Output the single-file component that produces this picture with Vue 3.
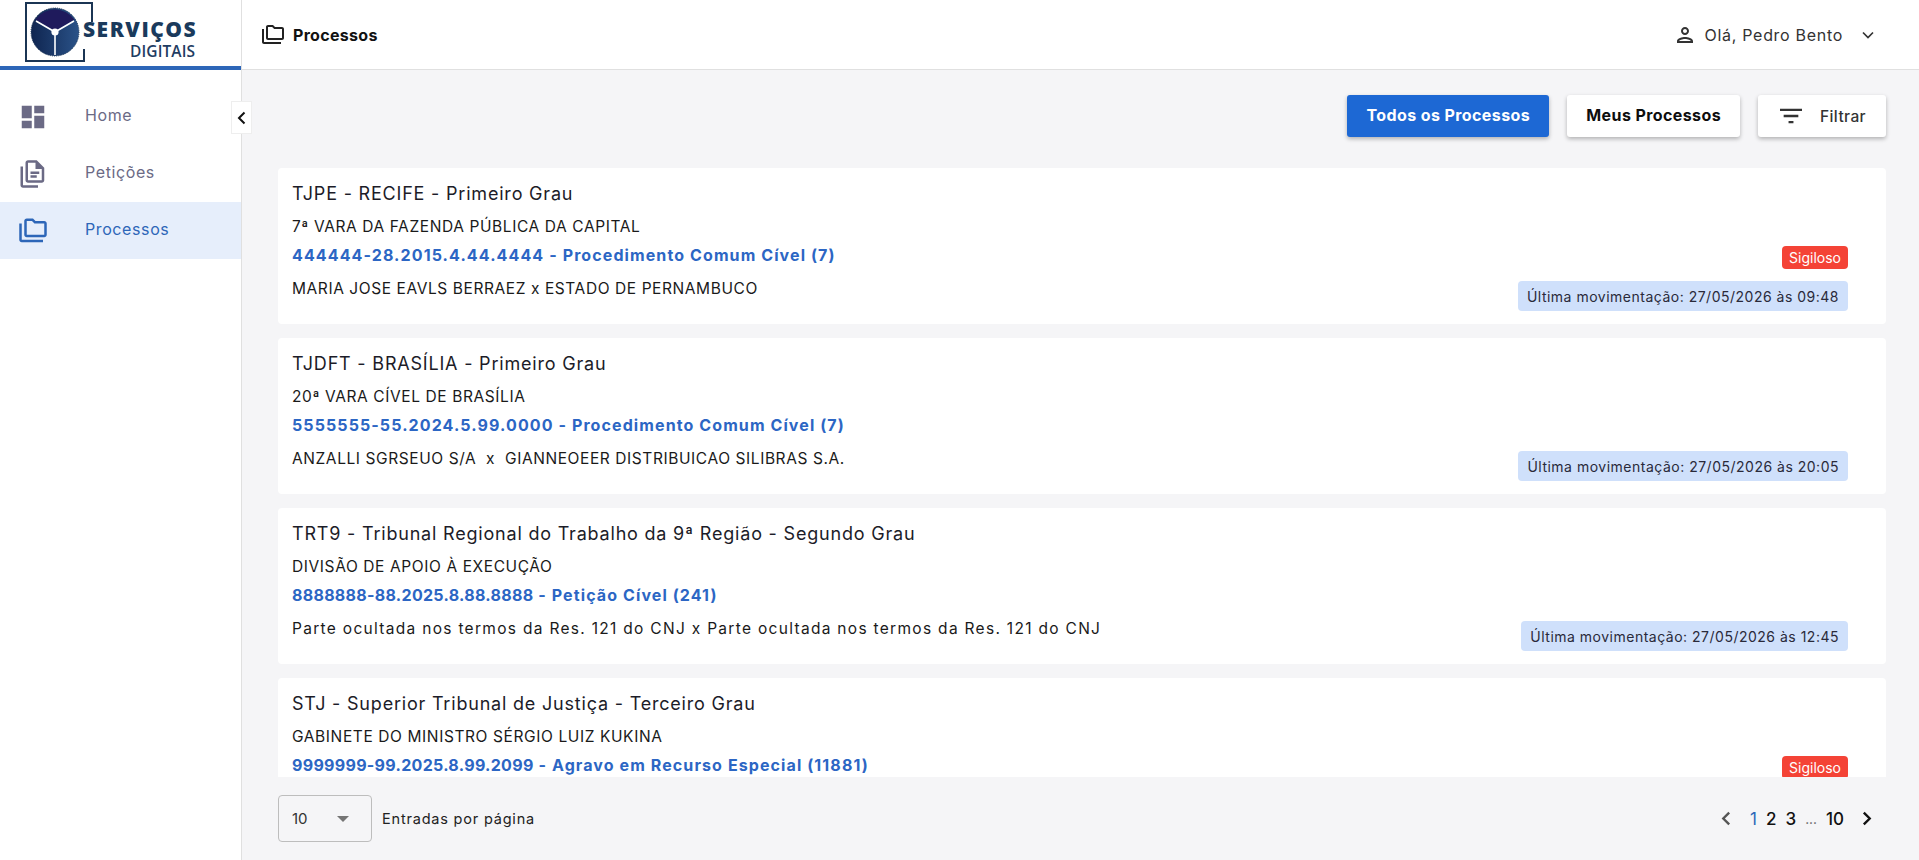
<script setup>
const menu = [
  { label: 'Home', icon: 'home' },
  { label: 'Petições', icon: 'doc' },
  { label: 'Processos', icon: 'folder', active: true },
]

const processos = [
  {
    tribunal: 'TJPE - RECIFE - Primeiro Grau',
    vara: '7ª VARA DA FAZENDA PÚBLICA DA CAPITAL',
    numero: '444444-28.2015.4.44.4444',
    classe: 'Procedimento Comum Cível (7)',
    partes: 'MARIA JOSE EAVLS BERRAEZ x ESTADO DE PERNAMBUCO',
    sigilo: true,
    mov: '27/05/2026 às 09:48',
  },
  {
    tribunal: 'TJDFT - BRASÍLIA - Primeiro Grau',
    vara: '20ª VARA CÍVEL DE BRASÍLIA',
    numero: '5555555-55.2024.5.99.0000',
    classe: 'Procedimento Comum Cível (7)',
    partes: 'ANZALLI SGRSEUO S/A  x  GIANNEOEER DISTRIBUICAO SILIBRAS S.A.',
    mov: '27/05/2026 às 20:05',
  },
  {
    tribunal: 'TRT9 - Tribunal Regional do Trabalho da 9ª Região - Segundo Grau',
    vara: 'DIVISÃO DE APOIO À EXECUÇÃO',
    numero: '8888888-88.2025.8.88.8888',
    classe: 'Petição Cível (241)',
    partes: 'Parte ocultada nos termos da Res. 121 do CNJ x Parte ocultada nos termos da Res. 121 do CNJ',
    ocultada: true,
    tight: true,
    mov: '27/05/2026 às 12:45',
  },
  {
    tribunal: 'STJ - Superior Tribunal de Justiça - Terceiro Grau',
    vara: 'GABINETE DO MINISTRO SÉRGIO LUIZ KUKINA',
    numero: '9999999-99.2025.8.99.2099',
    classe: 'Agravo em Recurso Especial (11881)',
    tight: true,
    sigilo: true,
  },
]

const folderPath = 'M3 19h17v2H3c-1.1 0-2-.9-2-2V6h2v13zM23 6v9c0 1.1-.9 2-2 2H7c-1.1 0-2-.9-2-2V4c0-1.1.9-2 2-2h5l2 2h7c1.1 0 2 .9 2 2zm-2 0h-7.83l-2-2H7v11h14V6z'
</script>

<template>
  <div class="app">
    <aside class="side">
      <div class="logo">
        <svg width="200" height="66" viewBox="0 0 200 66">
          <defs>
            <linearGradient id="seg" x1="0" y1="0" x2="1" y2="0">
              <stop offset="0" stop-color="#0f2550" />
              <stop offset="1" stop-color="#2a5288" />
            </linearGradient>
          </defs>
          <path d="M92 22V3H26v58h58V49" fill="none" stroke="#1b3554" stroke-width="2" />
          <circle cx="55" cy="32" r="24" fill="url(#seg)" stroke="#1b3554" stroke-dasharray="1 1.2" stroke-width="1" />
          <path d="M35.5 19.5a24 24 0 0 1 39 0L55 31z" fill="#1f1a5c" />
          <path d="M36 21l19 11 19-11M55 32v23" fill="none" stroke="#fff" stroke-width="1.6" />
          <circle cx="55" cy="32" r="3.6" fill="#fff" />
          <text x="83" y="37" class="logo-a">SERVIÇOS</text>
          <text x="130" y="57" class="logo-b">DIGITAIS</text>
        </svg>
      </div>

      <nav class="nav">
        <a v-for="item in menu" :key="item.label" class="nav-item" :class="{ active: item.active }">
          <svg class="nav-icon" viewBox="0 0 24 24" fill="currentColor">
            <path v-if="item.icon === 'home'" d="M3 13h8V3H3v10zm0 8h8v-6H3v6zm10 0h8V11h-8v10zm0-18v6h8V3h-8z" />
            <path v-else-if="item.icon === 'doc'" fill-rule="evenodd" d="M4 6H2v15c0 1.1.9 2 2 2h12v-2H4V6zM15 1H8c-1.1 0-2 .9-2 2v14c0 1.1.9 2 2 2h11c1.1 0 2-.9 2-2V7l-6-6zm4 16H8V3h6v5h5v9zM10 10h7v2h-7zM10 13h5v2h-5z" />
            <path v-else fill-rule="evenodd" :d="folderPath" />
          </svg>
          <span class="nav-label">{{ item.label }}</span>
        </a>
      </nav>

      <button type="button" class="collapse" aria-label="Recolher menu">
        <svg width="16" height="16" viewBox="0 0 16 16"><path d="M10.5 2.5 5 8l5.5 5.5" fill="none" stroke="#111" stroke-width="2" /></svg>
      </button>
    </aside>

    <div class="main">
      <header class="top">
        <div class="crumb">
          <svg width="24" height="24" viewBox="0 0 24 24" fill="#222"><path fill-rule="evenodd" :d="folderPath" /></svg>
          <span>Processos</span>
        </div>
        <div class="user">
          <svg width="24" height="24" viewBox="0 0 24 24" fill="#333"><path d="M12 6c1.1 0 2 .9 2 2s-.9 2-2 2-2-.9-2-2 .9-2 2-2m0 10c2.7 0 5.8 1.29 6 2H6c.23-.72 3.31-2 6-2m0-12C9.79 4 8 5.79 8 8s1.79 4 4 4 4-1.79 4-4-1.79-4-4-4zm0 10c-2.67 0-8 1.34-8 4v2h16v-2c0-2.66-5.33-4-8-4z" /></svg>
          <span>Olá, Pedro Bento</span>
          <svg width="14" height="14" viewBox="0 0 14 14"><path d="M2 4.5 7 9.5l5-5" fill="none" stroke="#333" stroke-width="1.7" /></svg>
        </div>
      </header>

      <div class="toolbar">
        <button type="button" class="btn primary">Todos os Processos</button>
        <button type="button" class="btn">Meus Processos</button>
        <button type="button" class="btn filter">
          <svg width="22" height="22" viewBox="3 3 18 18" fill="#333"><path d="M10 18h4v-2h-4v2zM3 6v2h18V6H3zm3 7h12v-2H6v2z" /></svg>
          <span>Filtrar</span>
        </button>
      </div>

      <section class="list">
        <article v-for="p in processos" :key="p.numero" class="card">
          <div class="info">
            <h3>{{ p.tribunal }}</h3>
            <p class="vara">{{ p.vara }}</p>
            <p class="numero"><span :class="{ tight: p.tight }">{{ p.numero }}</span> - {{ p.classe }}</p>
            <p v-if="p.partes" class="partes" :class="{ ocultada: p.ocultada }">{{ p.partes }}</p>
          </div>
          <div class="tags">
            <span v-if="p.sigilo" class="sigilo">Sigiloso</span>
            <span v-if="p.mov" class="mov">Última movimentação: {{ p.mov }}</span>
          </div>
        </article>
      </section>

      <footer class="foot">
        <div class="perpage">
          <div class="select">
            <span>10</span>
            <i class="caret"></i>
          </div>
          <span class="perpage-label">Entradas por página</span>
        </div>
        <div class="pages">
          <svg width="15" height="15" viewBox="0 0 14 14"><path d="M9.5 1.5 4 7l5.5 5.5" fill="none" stroke="#555" stroke-width="2.2" /></svg>
          <span class="cur">1</span>
          <span>2</span>
          <span>3</span>
          <span class="dots">...</span>
          <span class="last">10</span>
          <svg width="15" height="15" viewBox="0 0 14 14"><path d="M4.5 1.5 10 7l-5.5 5.5" fill="none" stroke="#111" stroke-width="2.2" /></svg>
        </div>
      </footer>
    </div>
  </div>
</template>

<style>
html, body { margin: 0; height: 100%; overflow: hidden; }
</style>

<style scoped>
.app {
  display: grid;
  grid-template-columns: 242px 1fr;
  grid-template-rows: 860px;
  height: 860px;
  background: #f5f5f7;
  color: #1c1c28;
  font-family: Inter, "Open Sans", sans-serif;
}

.side {
  position: relative;
  background: #fff;
  border-right: 1px solid #e0e0e0;
}

.logo {
  height: 66px;
  border-bottom: 4px solid #2d66b8;
}

.logo svg { display: block; }
.logo-a { font: 800 21px "Open Sans", sans-serif; fill: #1a3a5c; letter-spacing: 1.5px; }
.logo-b { font: 600 15.5px "Open Sans", sans-serif; fill: #1f3d63; letter-spacing: 0.1px; }

.nav {
  display: flex;
  flex-direction: column;
  padding-top: 18px;
}

.nav-item {
  display: flex;
  align-items: center;
  gap: 37px;
  height: 57px;
  padding-left: 18px;
  color: #6b6a85;
  font-size: 16px;
  letter-spacing: 0.6px;
}

.nav-label { padding-bottom: 3px; }

.nav-item.active {
  background: #e6eefb;
  color: #2d66b8;
}

.nav-icon { width: 30px; height: 30px; flex-shrink: 0; }

.collapse {
  position: absolute;
  top: 101px;
  right: -11px;
  width: 21px;
  height: 33px;
  padding: 0;
  display: grid;
  place-items: center;
  background: #fff;
  border: 1px solid #eee;
}

.main {
  display: flex;
  flex-direction: column;
  min-width: 0;
  min-height: 0;
  overflow: hidden;
}

.top {
  height: 69px;
  flex-shrink: 0;
  display: flex;
  align-items: center;
  justify-content: space-between;
  padding: 0 44px 0 19px;
  background: #fff;
  border-bottom: 1px solid #e0e0e0;
}

.crumb {
  display: flex;
  align-items: center;
  gap: 8px;
  font-size: 16px;
  letter-spacing: 0.3px;
  font-weight: 700;
  color: #111;
}

.user {
  display: flex;
  align-items: center;
  gap: 8px;
  font-size: 16px;
  letter-spacing: 0.7px;
  color: #333;
}

.user svg:last-child { margin-left: 10px; }

.toolbar {
  flex-shrink: 0;
  display: flex;
  justify-content: flex-end;
  gap: 18px;
  padding: 25px 33px 31px 0;
}

.btn {
  height: 42px;
  padding: 0 19px 2px;
  border: 0;
  border-radius: 3px;
  background: #fff;
  color: #0d0d0d;
  font: 700 16px Inter, sans-serif;
  letter-spacing: 0.4px;
  box-shadow: 0 2px 4px rgba(0, 0, 0, 0.28);
}

.btn.primary {
  background: #1d68d4;
  color: #fff;
  width: 202px;
}

.btn.filter {
  display: flex;
  align-items: center;
  gap: 18px;
  padding: 0 20px 0 22px;
  color: #333;
  font-size: 15.5px;
  font-weight: 500;
}

.list {
  flex: 1;
  min-height: 0;
  overflow: hidden;
  display: flex;
  flex-direction: column;
  gap: 14px;
  margin: 0 33px 0 36px;
}

.card {
  flex: 0 0 156px;
  display: flex;
  justify-content: space-between;
  padding: 14px 38px 13px 14px;
  box-sizing: border-box;
  background: #fff;
  border-radius: 4px;
}

.info {
  min-width: 0;
}

.info h3 {
  margin: 0;
  font-size: 18px;
  font-weight: 400;
  line-height: 24px;
  letter-spacing: 0.8px;
  color: #1c1c28;
}

.info p {
  margin: 0;
  line-height: 24px;
}

.info .vara {
  margin-top: 9px;
  font-size: 15.5px;
  letter-spacing: 0.6px;
  color: #1a1a1a;
}

.info .numero {
  margin-top: 4px;
  font-size: 16px;
  font-weight: 700;
  color: #2c66c4;
  letter-spacing: 1.1px;
}

.tight { letter-spacing: 0.3px; }

.info .partes {
  margin-top: 10px;
  font-size: 15.5px;
  letter-spacing: 0.58px;
  color: #1a1a1a;
  white-space: pre;
}

.info .partes.ocultada { letter-spacing: 1.3px; }

.tags {
  display: grid;
  grid-template-rows: 23px 30px;
  row-gap: 12px;
  align-content: end;
  justify-items: end;
  flex-shrink: 0;
}

.sigilo {
  grid-row: 1;
  display: flex;
  align-items: center;
  padding: 0 7px;
  background: #f44336;
  color: #fff;
  border-radius: 4px;
  font-size: 14px;
}

.mov {
  grid-row: 2;
  display: flex;
  align-items: center;
  padding: 0 9px;
  background: #cfe0fb;
  border-radius: 4px;
  font-size: 14px;
  letter-spacing: 0.5px;
  color: #2a2a3a;
}

.foot {
  height: 83px;
  flex-shrink: 0;
  display: flex;
  align-items: center;
  justify-content: space-between;
  padding: 0 45px 0 36px;
}

.perpage {
  display: flex;
  align-items: center;
  gap: 10px;
}

.select {
  width: 94px;
  height: 47px;
  box-sizing: border-box;
  display: flex;
  align-items: center;
  justify-content: space-between;
  padding: 0 22px 0 13px;
  border: 1px solid #bdbdbd;
  border-radius: 4px;
  font-size: 15px;
  color: #333;
}

.caret {
  width: 0;
  height: 0;
  border-left: 6px solid transparent;
  border-right: 6px solid transparent;
  border-top: 6px solid #757575;
}

.perpage-label {
  font-size: 14.5px;
  letter-spacing: 0.8px;
  color: #222;
}

.pages {
  display: flex;
  align-items: center;
  gap: 9px;
  font-size: 17px;
  font-weight: 500;
  color: #111;
}

.pages .cur { margin-left: 7px; color: #2d66b8; font-weight: 400; }
.pages .dots { color: #666; font-size: 13px; }
.pages svg:last-child { margin-left: 6px; }
</style>
